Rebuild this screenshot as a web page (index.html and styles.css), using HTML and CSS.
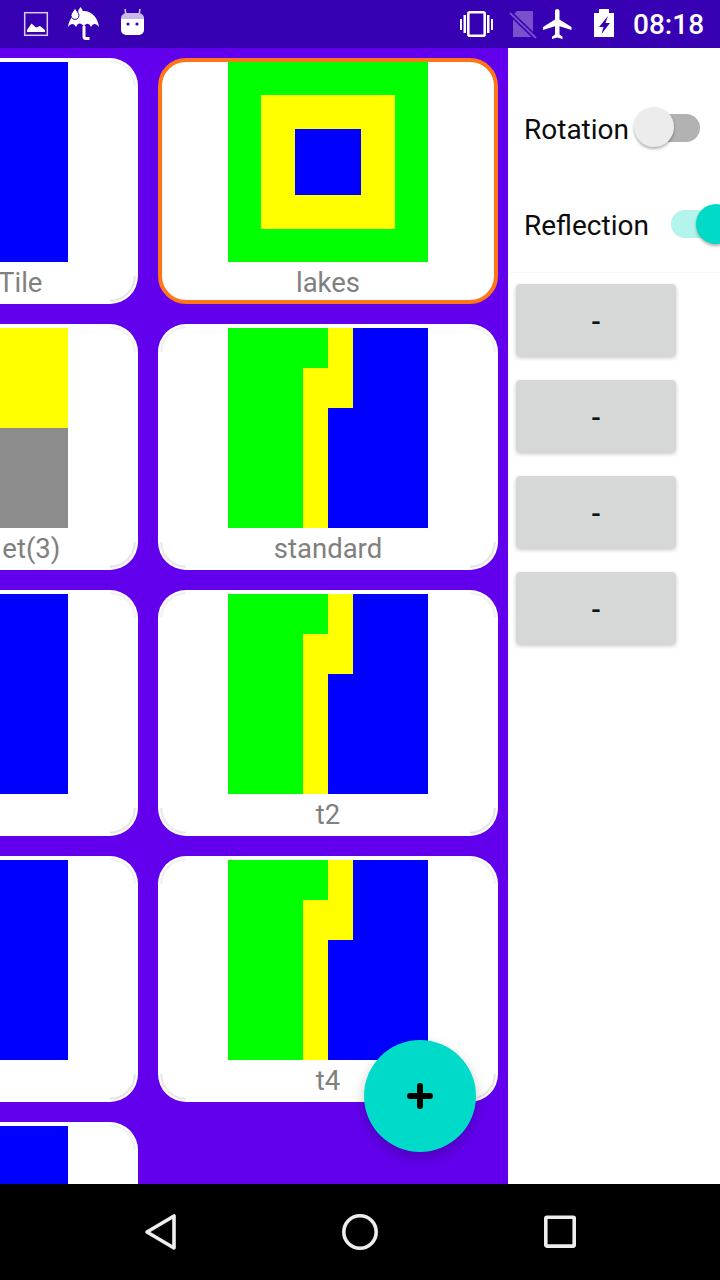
FILE: index.html
```html
<!DOCTYPE html>
<html lang="en">
<head>
<meta charset="utf-8">
<title>Tile sets</title>
<link rel="stylesheet" href="styles.css">
</head>
<body>
<svg class="defs" width="0" height="0" aria-hidden="true">
  <defs>
    <symbol id="standard" viewBox="0 0 200 200">
      <rect width="200" height="200" fill="#00ff00"/>
      <path d="M100 0H125V80H100V200H75V40H100Z" fill="#ffff00"/>
      <path d="M125 0H200V200H100V80H125Z" fill="#0000ff"/>
    </symbol>
    <symbol id="lakes" viewBox="0 0 200 200">
      <rect width="200" height="200" fill="#00ff00"/>
      <rect x="33" y="33" width="134" height="134" fill="#ffff00"/>
      <rect x="67" y="67" width="66" height="66" fill="#0000ff"/>
    </symbol>
    <symbol id="set3" viewBox="0 0 200 200">
      <rect width="200" height="100" fill="#ffff00"/>
      <rect y="100" width="200" height="100" fill="#8c8c8c"/>
    </symbol>
  </defs>
</svg>
<div class="app">
  <header class="status">
    <svg class="si" viewBox="0 0 36 36"><rect x="6.7" y="6.7" width="22.6" height="22.6" class="frame"/><path d="M9 26V24L13.5 17.5L18 21.5L22 20L27 24V26Z" class="white"/></svg>
    <svg class="si" viewBox="0 0 36 36"><path d="M2 21C3 12 10 5 18 5C26 5 32 12 33 21C30 17 27 17 25 21C23 17 20 16.500 18 20.500C15 16.500 12 16.500 10 21C8 17 5 17 2 21Z" class="white"/><path d="M18 20V30.500Q18 32.500 20 32.500H23.500" class="handle"/><path d="M9 2L12.500 7.500A4 4 0 1 1 5.500 7.500Z" class="drop"/><path d="M14.500 1L16.500 4A2.300 2.300 0 1 1 12.500 4Z" class="white"/></svg>
    <svg class="si" viewBox="0 0 36 36"><path d="M11 3L12 9M26 3L25 9" class="antenna"/><path d="M7 13V12C7 9 10 7 13 7H24C27 7 30 9 30 12V13Z" class="faded"/><path d="M7 13H30V24C30 27 27 29 24 29H13C10 29 7 27 7 24Z" class="white"/><circle cx="14" cy="18" r="1.600" class="eye"/><circle cx="23" cy="18" r="1.600" class="eye"/></svg>
    <div class="status-gap"></div>
    <svg class="si" viewBox="0 0 36 36"><rect x="9.300" y="6.300" width="16.400" height="23.400" rx="1.500" class="phone"/><path d="M1 13H3V24H1ZM4.500 9H7V27H4.500ZM28 9H30.500V27H28ZM32 13H34V24H32Z" class="white"/></svg>
    <svg class="si sim" viewBox="0 0 36 36"><path d="M13 5H29V31H9V9Z" class="sim-body"/><path d="M6 7L32 32" class="sim-gap"/><path d="M6 7L32 32" class="sim-slash"/></svg>
    <svg class="si" viewBox="0 0 24 24"><path d="M21 16v-2l-8-5V3.500c0-.83-.67-1.500-1.500-1.500S10 2.670 10 3.500V9l-8 5v2l8-2.500V19l-2 1.500V22l3.500-1 3.500 1v-1.500L13 19v-5.500l8 2.500z" class="white"/></svg>
    <svg class="si batt" viewBox="0 0 36 36"><path d="M13 3H23V7H28V31H8V7H13Z" class="white"/><path d="M22 10L13 21H17.500L15.500 28L24 17H19.500Z" class="bolt"/></svg>
    <span class="clock">08:18</span>
  </header>

  <main class="content">
    <section class="gallery">
      <article class="card"><svg class="tile"><use href="#standard"/></svg><span class="name">Triangle Tile</span></article>
      <article class="card selected"><svg class="tile"><use href="#lakes"/></svg><span class="name">lakes</span></article>
      <article class="card"><svg class="tile"><use href="#set3"/></svg><span class="name">Heptagon et(3)</span></article>
      <article class="card"><svg class="tile"><use href="#standard"/></svg><span class="name">standard</span></article>
      <article class="card"><svg class="tile"><use href="#standard"/></svg><span class="name">t1</span></article>
      <article class="card"><svg class="tile"><use href="#standard"/></svg><span class="name">t2</span></article>
      <article class="card"><svg class="tile"><use href="#standard"/></svg><span class="name">t3</span></article>
      <article class="card"><svg class="tile"><use href="#standard"/></svg><span class="name">t4</span></article>
      <article class="card"><svg class="tile"><use href="#standard"/></svg><span class="name">t5</span></article>
    </section>

    <aside class="panel">
      <div class="options">
        <div class="option rotation">
          <span class="option-label">Rotation</span>
          <span class="switch"><span class="track"></span><span class="thumb"></span></span>
        </div>
        <div class="option reflection">
          <span class="option-label">Reflection</span>
          <span class="switch on"><span class="track"></span><span class="thumb"></span></span>
        </div>
      </div>
      <div class="actions">
        <button class="action">-</button>
        <button class="action">-</button>
        <button class="action">-</button>
        <button class="action">-</button>
      </div>
    </aside>

    <button class="fab" aria-label="Add">
      <svg class="fab-icon" viewBox="0 0 26 26"><path d="M3 13H23M13 3V23"/></svg>
    </button>
  </main>

  <nav class="navbar">
    <svg class="nav-icon" viewBox="0 0 40 40"><path d="M34 4V36L7 20Z"/></svg>
    <svg class="nav-icon" viewBox="0 0 40 40"><circle cx="20" cy="20" r="16.200"/></svg>
    <svg class="nav-icon" viewBox="0 0 40 40"><rect x="5.800" y="5.300" width="28.400" height="28.800" rx="1"/></svg>
  </nav>
</div>
</body>
</html>
```

FILE: styles.css
```css
* { box-sizing: border-box; }

html, body { margin: 0; padding: 0; }

body {
  font-family: Roboto, "Noto Sans", sans-serif;
  background: #000;
}

.defs { position: absolute; }

.app {
  width: 720px;
  height: 1280px;
  display: flex;
  flex-direction: column;
  overflow: hidden;
}

/* status bar */
.status {
  flex: 0 0 48px;
  height: 48px;
  background: #3700b3;
  display: flex;
  align-items: center;
  gap: 12px;
  padding-left: 18px;
}

.si { width: 36px; height: 36px; flex: none; }
.status-gap { width: 285px; flex: none; }
.status .sim { margin-right: -12px; }
.status .batt { margin-left: -2px; }
.status .si:nth-of-type(4) { margin-right: -3px; }

.white { fill: #fff; }
.faded { fill: #c9b8e8; }
.frame { fill: none; stroke: #d8cdf0; stroke-width: 1.500; }
.handle { fill: none; stroke: #fff; stroke-width: 3; }
.drop { fill: #fff; stroke: #3700b3; stroke-width: 1; }
.antenna { fill: none; stroke: #c9b8e8; stroke-width: 1.600; }
.eye { fill: #3700b3; }
.phone { fill: none; stroke: #fff; stroke-width: 2.600; }
.sim-body { fill: #7a50cc; }
.sim-gap { fill: none; stroke: #3700b3; stroke-width: 5; }
.sim-slash { fill: none; stroke: #7a50cc; stroke-width: 1.800; }
.bolt { fill: #3700b3; }

.clock {
  margin: 2px 0 0 -1px;
  color: #fff;
  font-size: 28px;
  font-weight: 500;
  line-height: 46px;
  white-space: nowrap;
}

/* main */
.content {
  position: relative;
  flex: 0 0 1136px;
  height: 1136px;
  display: flex;
  background: #6200ee;
}

.gallery {
  flex: 0 0 508px;
  width: 508px;
  height: 1136px;
  overflow: hidden;
  display: grid;
  grid-template-columns: 340px 340px;
  grid-auto-rows: 246px;
  gap: 20px;
  padding: 10px 10px 0 0;
  justify-content: end;
}

.card {
  position: relative;
  background: #fff;
  border-radius: 28px;
  padding-top: 4px;
  display: flex;
  flex-direction: column;
  align-items: center;
}

.card::before {
  content: "";
  position: absolute;
  inset: 0;
  border-radius: 28px;
  background:
    radial-gradient(circle at 100% 100%, transparent 23px, #eeeeee 24.500px, #eeeeee 25px, transparent 26.500px) 0 0 / 28px 28px no-repeat,
    radial-gradient(circle at 0 100%, transparent 23px, #f0f0f0 24.500px, #f0f0f0 25px, transparent 26.500px) 100% 0 / 28px 28px no-repeat,
    radial-gradient(circle at 100% 0, transparent 23px, #e6e6e6 24.500px, #e6e6e6 25px, transparent 26.500px) 0 100% / 28px 28px no-repeat,
    radial-gradient(circle at 0 0, transparent 23px, #e2e2e2 24.500px, #e2e2e2 25px, transparent 26.500px) 100% 100% / 28px 28px no-repeat;
}

.card.selected {
  border: 4px solid #ff7518;
  padding-top: 0;
}

.card.selected::before { display: none; }

.tile {
  position: relative;
  display: block;
  width: 200px;
  height: 200px;
  flex: none;
  shape-rendering: crispEdges;
}

.name {
  position: relative;
  color: #808080;
  font-size: 27.500px;
  line-height: 40px;
  margin-top: 1px;
  white-space: nowrap;
}

/* side panel */
.panel {
  flex: 0 0 212px;
  width: 212px;
  background: #fff;
  overflow: hidden;
}

.options {
  height: 225px;
  padding: 31px 0 0 16px;
  border-bottom: 1px solid #f7f7f7;
}

.option {
  display: flex;
  align-items: center;
  height: 96px;
}

.option-label {
  color: #0c0c0c;
  font-size: 28px;
  line-height: 96px;
  margin-top: 6px;
  white-space: nowrap;
}

.switch {
  position: relative;
  display: block;
  flex: none;
  width: 66px;
  height: 40px;
  margin-left: 5px;
}

.reflection .switch { margin-left: 22px; }

.track {
  position: absolute;
  top: 7px;
  left: 9px;
  right: 0;
  height: 28px;
  border-radius: 14px;
  background: #b2b2b2;
}

.thumb {
  position: absolute;
  top: 0;
  left: 0;
  width: 40px;
  height: 40px;
  border-radius: 50%;
  background: #ececec;
  box-shadow: 0 2px 3px rgba(0, 0, 0, .3);
}

.switch.on .track {
  left: 0;
  width: 50px;
  background: #b3f4ec;
}

.switch.on .thumb {
  top: 1px;
  left: 25px;
  background: #00dac6;
}

.actions {
  display: flex;
  flex-direction: column;
  gap: 24px;
  padding: 11px 0 0 8px;
}

.action {
  width: 160px;
  height: 72px;
  padding: 2px 0 0;
  border: 0;
  border-radius: 4px;
  background: #d6d7d7;
  color: #111;
  font-family: inherit;
  font-size: 28px;
  font-weight: 500;
  box-shadow: 0 2px 4px rgba(0, 0, 0, .22);
}

/* floating action button */
.fab {
  position: absolute;
  left: 364px;
  top: 992px;
  width: 112px;
  height: 112px;
  padding: 0;
  border: 0;
  border-radius: 50%;
  background: #00dac9;
  display: flex;
  align-items: center;
  justify-content: center;
  box-shadow: 0 6px 14px rgba(0, 0, 0, .22);
}

.fab-icon { width: 26px; height: 26px; }
.fab-icon path { fill: none; stroke: #000; stroke-width: 6; stroke-linecap: round; }

/* navigation bar */
.navbar {
  flex: 0 0 96px;
  height: 96px;
  background: #000;
  display: flex;
  align-items: center;
  justify-content: center;
  gap: 160px;
}

.nav-icon { width: 40px; height: 40px; flex: none; }
.nav-icon path, .nav-icon circle, .nav-icon rect {
  fill: none;
  stroke: #eee;
  stroke-width: 3.600;
  stroke-linejoin: round;
}
```
